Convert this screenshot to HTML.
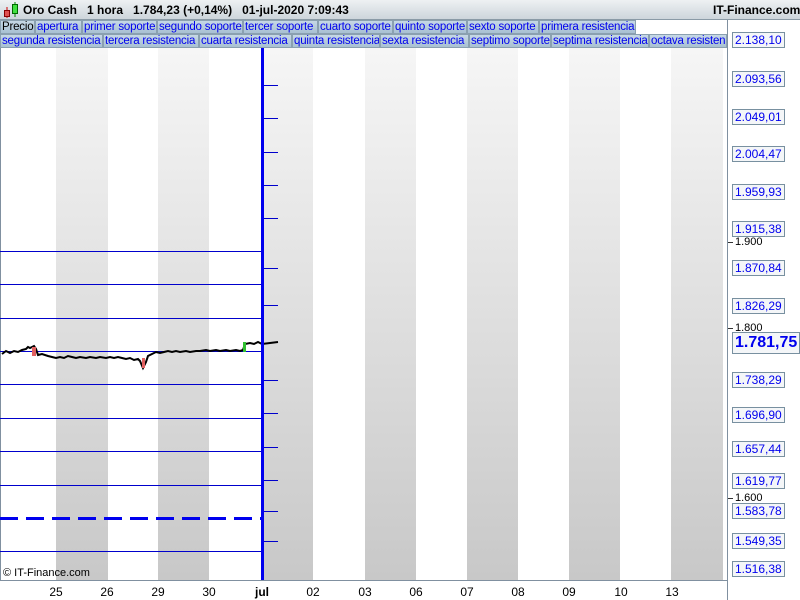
<!DOCTYPE html>
<html><head><meta charset="utf-8"><style>
*{margin:0;padding:0;box-sizing:border-box}
body{width:800px;height:600px;overflow:hidden;background:#fff;font-family:"Liberation Sans",sans-serif;position:relative}
.a{position:absolute;white-space:nowrap}
.hdr{left:0;top:0;width:800px;height:20px;background:linear-gradient(#eef1f3,#cdd5db);border-bottom:1px solid #8a9aa6;font-size:12px;font-weight:bold;line-height:20px}
.tab{position:absolute;height:14px;font-size:11.5px;line-height:13px;color:#0000ee;background:linear-gradient(#c6d8e6,#a8c0d2);border:1px solid #8aa0b0;padding-left:1px;white-space:nowrap;overflow:hidden;letter-spacing:-0.2px}
.g{background:linear-gradient(#f6f6f6,#c8c8c8)}
.hl{position:absolute;left:0;width:262px;height:1px;background:#0000cc}
.lb{position:absolute;left:732px;height:16px;font-size:12px;line-height:14px;color:#0000ee;background:#f4f6f8;border:1px solid #7890a0;padding:0 2px;white-space:nowrap}
.tk{position:absolute;left:728px;width:5px;height:1px;background:#333}
.pl{position:absolute;left:735px;font-size:11px;color:#000;line-height:12px}
.rt{position:absolute;left:264px;width:14px;height:1px;background:#0000cc}
.xl{position:absolute;top:585px;font-size:12px;width:30px;text-align:center}
</style></head><body>
<div class="a hdr"><svg class="a" style="left:3px;top:1px" width="16" height="18"><line x1="4" y1="6" x2="4" y2="17" stroke="#c00"/><rect x="1.5" y="9.5" width="5" height="6" fill="#e05050" stroke="#800"/><line x1="12" y1="1" x2="12" y2="16" stroke="#080"/><rect x="9.5" y="3.5" width="5" height="9" fill="#40e040" stroke="#060"/></svg><span class="a" style="left:23px">Oro Cash&nbsp;&nbsp;&nbsp;1 hora&nbsp;&nbsp;&nbsp;1.784,23 (+0,14%)&nbsp;&nbsp;&nbsp;01-jul-2020 7:09:43</span><span class="a" style="left:713px">IT-Finance.com</span></div>
<div class="a" style="left:0;top:20px;width:800px;height:28px;background:#fff"></div>
<div class="tab" style="left:0;top:20px;width:35px;color:#000">Precio</div>
<div class="tab" style="left:35px;top:20px;width:47px">apertura</div>
<div class="tab" style="left:82px;top:20px;width:75px">primer soporte</div>
<div class="tab" style="left:157px;top:20px;width:86px">segundo soporte</div>
<div class="tab" style="left:243px;top:20px;width:75px">tercer soporte</div>
<div class="tab" style="left:318px;top:20px;width:75px">cuarto soporte</div>
<div class="tab" style="left:393px;top:20px;width:74px">quinto soporte</div>
<div class="tab" style="left:467px;top:20px;width:72px">sexto soporte</div>
<div class="tab" style="left:539px;top:20px;width:97px">primera resistencia</div>
<div class="tab" style="left:0;top:34px;width:103px">segunda resistencia</div>
<div class="tab" style="left:103px;top:34px;width:96px">tercera resistencia</div>
<div class="tab" style="left:199px;top:34px;width:93px">cuarta resistencia</div>
<div class="tab" style="left:292px;top:34px;width:88px">quinta resistencia</div>
<div class="tab" style="left:380px;top:34px;width:89px">sexta resistencia</div>
<div class="tab" style="left:469px;top:34px;width:82px">septimo soporte</div>
<div class="tab" style="left:551px;top:34px;width:98px">septima resistencia</div>
<div class="tab" style="left:649px;top:34px;width:78px">octava resisten</div>
<div class="a g" style="left:56px;top:48px;width:52px;height:532px"></div>
<div class="a g" style="left:158px;top:48px;width:51px;height:532px"></div>
<div class="a g" style="left:262px;top:48px;width:51px;height:532px"></div>
<div class="a g" style="left:365px;top:48px;width:51px;height:532px"></div>
<div class="a g" style="left:467px;top:48px;width:51px;height:532px"></div>
<div class="a g" style="left:569px;top:48px;width:51px;height:532px"></div>
<div class="a g" style="left:671px;top:48px;width:52px;height:532px"></div>
<div class="a" style="left:0;top:48px;width:1px;height:532px;background:#8090a0"></div>
<div class="hl" style="top:251px"></div><div class="hl" style="top:284px"></div><div class="hl" style="top:318px"></div><div class="hl" style="top:351px"></div><div class="hl" style="top:384px"></div><div class="hl" style="top:418px"></div><div class="hl" style="top:451px"></div><div class="hl" style="top:485px"></div><div class="hl" style="top:551px"></div>
<div class="a" style="left:0;top:517px;width:262px;height:3px;background:repeating-linear-gradient(90deg,#0000ee 0 18px,transparent 18px 26px)"></div>
<svg class="a" style="left:0;top:330px" width="290" height="50"><polyline fill="none" stroke="#000" stroke-width="2" points="2,24 6,21 10,23 14,21 18,22 22,20 26,19 28,17 30,18 34,16 36,19 38,25 42,24 48,26 52,27 56,28 60,27 64,28 68,26 72,27 76,28 80,27 86,28 90,27 96,28 100,27 106,28 110,27 114,28 118,27 122,28 126,29 130,28 134,30 138,29 140,31 143,38 146,32 148,26 152,24 156,22 160,23 164,22 168,21 172,22 176,21 180,22 186,21 190,22 196,21 200,21 206,20 210,21 216,20 220,21 226,20 230,21 236,20 240,21 243,20 245,14 250,13 254,14 258,12 262,14 270,13 278,12"/><rect x="32" y="17" width="4" height="9" fill="#e06060"/><rect x="142" y="28" width="3" height="10" fill="#e06060"/><rect x="243" y="12" width="3" height="10" fill="#30c030"/></svg>
<div class="a" style="left:261px;top:48px;width:3px;height:532px;background:#0000ee"></div>
<div class="rt" style="top:85px"></div><div class="rt" style="top:118px"></div><div class="rt" style="top:152px"></div><div class="rt" style="top:185px"></div><div class="rt" style="top:218px"></div><div class="rt" style="top:268px"></div><div class="rt" style="top:305px"></div><div class="rt" style="top:380px"></div><div class="rt" style="top:413px"></div><div class="rt" style="top:447px"></div><div class="rt" style="top:480px"></div><div class="rt" style="top:511px"></div><div class="rt" style="top:541px"></div>
<div class="a" style="left:3px;top:567px;font-size:11px">© IT-Finance.com</div>
<div class="a" style="left:727px;top:20px;width:1px;height:580px;background:#8090a0"></div>
<div class="a" style="left:0;top:580px;width:728px;height:1px;background:#8090a0"></div>
<div class="pl" style="top:236px">1.900</div><div class="tk" style="top:242px"></div>
<div class="pl" style="top:322px">1.800</div><div class="tk" style="top:328px"></div>
<div class="pl" style="top:492px">1.600</div><div class="tk" style="top:498px"></div>
<div class="lb" style="top:32px">2.138,10</div>
<div class="lb" style="top:71px">2.093,56</div>
<div class="lb" style="top:109px">2.049,01</div>
<div class="lb" style="top:146px">2.004,47</div>
<div class="lb" style="top:184px">1.959,93</div>
<div class="lb" style="top:221px">1.915,38</div>
<div class="lb" style="top:260px">1.870,84</div>
<div class="lb" style="top:298px">1.826,29</div>
<div class="lb" style="top:332px;height:22px;font-size:16px;font-weight:bold;line-height:20px;padding:0 2px">1.781,75</div>
<div class="lb" style="top:372px">1.738,29</div>
<div class="lb" style="top:407px">1.696,90</div>
<div class="lb" style="top:441px">1.657,44</div>
<div class="lb" style="top:473px">1.619,77</div>
<div class="lb" style="top:503px">1.583,78</div>
<div class="lb" style="top:533px">1.549,35</div>
<div class="lb" style="top:561px">1.516,38</div>
<div class="xl" style="left:41px">25</div><div class="xl" style="left:92px">26</div><div class="xl" style="left:143px">29</div><div class="xl" style="left:194px">30</div><div class="xl" style="left:247px;font-weight:bold">jul</div><div class="xl" style="left:298px">02</div><div class="xl" style="left:350px">03</div><div class="xl" style="left:401px">06</div><div class="xl" style="left:452px">07</div><div class="xl" style="left:503px">08</div><div class="xl" style="left:554px">09</div><div class="xl" style="left:606px">10</div><div class="xl" style="left:657px">13</div>
</body></html>
